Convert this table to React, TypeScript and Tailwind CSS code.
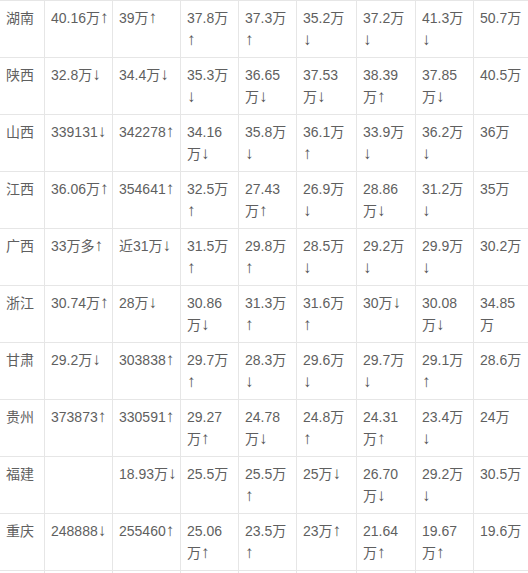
const rows: string[][] = [
  ['湖南', '40.16万↑', '39万↑', '37.8万|↑', '37.3万|↑', '35.2万|↓', '37.2万|↓', '41.3万|↓', '50.7万'],
  ['陕西', '32.8万↓', '34.4万↓', '35.3万|↓', '36.65|万↓', '37.53|万↓', '38.39|万↑', '37.85|万↓', '40.5万'],
  ['山西', '339131↓', '342278↑', '34.16|万↓', '35.8万|↓', '36.1万|↑', '33.9万|↓', '36.2万|↓', '36万'],
  ['江西', '36.06万↑', '354641↑', '32.5万|↑', '27.43|万↑', '26.9万|↓', '28.86|万↓', '31.2万|↓', '35万'],
  ['广西', '33万多↑', '近31万↓', '31.5万|↑', '29.8万|↑', '28.5万|↓', '29.2万|↓', '29.9万|↓', '30.2万'],
  ['浙江', '30.74万↑', '28万↓', '30.86|万↓', '31.3万|↑', '31.6万|↑', '30万↓', '30.08|万↓', '34.85|万'],
  ['甘肃', '29.2万↓', '303838↑', '29.7万|↑', '28.3万|↓', '29.6万|↓', '29.7万|↓', '29.1万|↑', '28.6万'],
  ['贵州', '373873↑', '330591↑', '29.27|万↑', '24.78|万↓', '24.8万|↑', '24.31|万↑', '23.4万|↓', '24万'],
  ['福建', '', '18.93万↓', '25.5万', '25.5万|↑', '25万↓', '26.70|万↓', '29.2万|↓', '30.5万'],
  ['重庆', '248888↓', '255460↑', '25.06|万↑', '23.5万|↑', '23万↑', '21.64|万↑', '19.67|万↑', '19.6万'],
  ['', '', '', '', '', '', '', '', ''],
];

// arrows in the original are narrow but as tall as the digits
function Line({ text }: { text: string }) {
  const parts = text.split(/([↑↓])/);
  return (
    <div className="whitespace-nowrap leading-[22.4px]">
      {parts.map((p, i) =>
        p === '↑' || p === '↓' ? (
          <span key={i} className="text-[17px] text-[#555]">
            {p}
          </span>
        ) : (
          <span key={i}>{p}</span>
        )
      )}
    </div>
  );
}

function Cell({ text }: { text: string }) {
  const lines = text ? text.split('|') : [];
  return (
    <div className="border-t border-r border-[#e6e6e6] pl-[6px] pt-[6px] h-[57px] overflow-hidden">
      {lines.map((l, i) => (
        <Line key={i} text={l} />
      ))}
    </div>
  );
}

export default function App() {
  return (
    <div className="w-[528px] h-[573px] overflow-hidden bg-white">
      <div
        className="grid grid-cols-[45px_68px_68px_58px_58px_60px_59px_58px_80px] w-[554px] text-[14px] text-[#5f5f5f]"
        style={{ fontFamily: '"Liberation Sans", "Noto Sans CJK SC", sans-serif' }}
      >
        {rows.map((r, ri) => r.map((c, ci) => <Cell key={ri + '-' + ci} text={c} />))}
      </div>
    </div>
  );
}
